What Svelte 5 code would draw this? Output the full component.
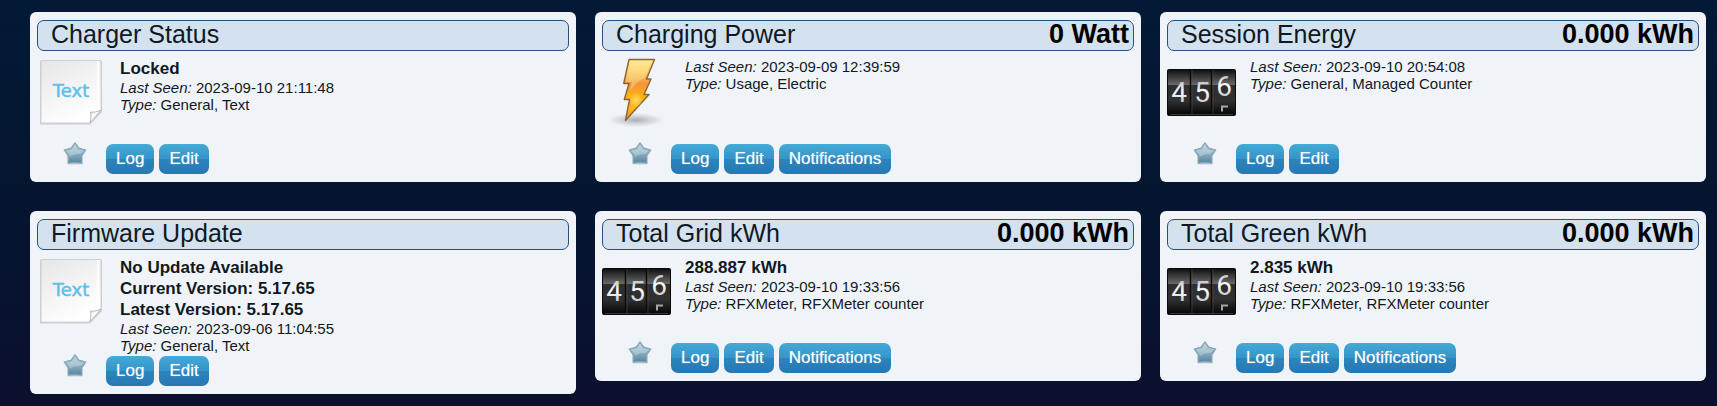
<script>
  const devices = [
    { name: 'Charger Status', value: '', icon: 'text', lines: ['Locked'], seen: '2023-09-10 21:11:48', type: 'General, Text', actions: ['Log', 'Edit'] },
    { name: 'Charging Power', value: '0 Watt', icon: 'power', lines: [], seen: '2023-09-09 12:39:59', type: 'Usage, Electric', actions: ['Log', 'Edit', 'Notifications'] },
    { name: 'Session Energy', value: '0.000 kWh', icon: 'counter', lines: [], seen: '2023-09-10 20:54:08', type: 'General, Managed Counter', actions: ['Log', 'Edit'] },
    { name: 'Firmware Update', value: '', icon: 'text', lines: ['No Update Available', 'Current Version: 5.17.65', 'Latest Version: 5.17.65'], seen: '2023-09-06 11:04:55', type: 'General, Text', actions: ['Log', 'Edit'] },
    { name: 'Total Grid kWh', value: '0.000 kWh', icon: 'counter', lines: ['288.887 kWh'], seen: '2023-09-10 19:33:56', type: 'RFXMeter, RFXMeter counter', actions: ['Log', 'Edit', 'Notifications'] },
    { name: 'Total Green kWh', value: '0.000 kWh', icon: 'counter', lines: ['2.835 kWh'], seen: '2023-09-10 19:33:56', type: 'RFXMeter, RFXMeter counter', actions: ['Log', 'Edit', 'Notifications'] }
  ];
</script>

<svg class="defs" width="0" height="0" aria-hidden="true">
  <defs>
    <linearGradient id="paper" x1="0" y1="0" x2="0.5" y2="1">
      <stop offset="0" stop-color="#e6e6e6" />
      <stop offset="0.55" stop-color="#f4f4f4" />
      <stop offset="1" stop-color="#ffffff" />
    </linearGradient>
    <linearGradient id="fold" x1="0" y1="0" x2="1" y2="1">
      <stop offset="0" stop-color="#d2d2d2" />
      <stop offset="0.4" stop-color="#ffffff" />
      <stop offset="1" stop-color="#c4c4c4" />
    </linearGradient>
    <linearGradient id="bolt" x1="0" y1="0" x2="0" y2="1">
      <stop offset="0" stop-color="#ffe488" />
      <stop offset="0.2" stop-color="#fbc95e" />
      <stop offset="0.4" stop-color="#f3963a" />
      <stop offset="0.6" stop-color="#fbb012" />
      <stop offset="0.8" stop-color="#fdb61b" />
      <stop offset="1" stop-color="#ee8a10" />
    </linearGradient>
    <radialGradient id="shade">
      <stop offset="0" stop-color="#70757c" stop-opacity="0.55" />
      <stop offset="0.5" stop-color="#70757c" stop-opacity="0.25" />
      <stop offset="1" stop-color="#70757c" stop-opacity="0" />
    </radialGradient>
    <radialGradient id="glow">
      <stop offset="0" stop-color="#fff29a" />
      <stop offset="1" stop-color="#fff29a" stop-opacity="0" />
    </radialGradient>
    <linearGradient id="drum" x1="0" y1="0" x2="0" y2="1">
      <stop offset="0" stop-color="#101010" />
      <stop offset="0.1" stop-color="#2c2c2c" />
      <stop offset="0.33" stop-color="#686868" />
      <stop offset="0.34" stop-color="#2e2e2e" />
      <stop offset="0.7" stop-color="#303030" />
      <stop offset="1" stop-color="#080808" />
    </linearGradient>
    <linearGradient id="digit" x1="0" y1="0" x2="0" y2="1">
      <stop offset="0" stop-color="#a8a8a8" />
      <stop offset="0.5" stop-color="#ffffff" />
      <stop offset="1" stop-color="#a0a0a0" />
    </linearGradient>
    <linearGradient id="star" x1="0" y1="0" x2="0" y2="1">
      <stop offset="0" stop-color="#b4cad6" />
      <stop offset="0.45" stop-color="#92b4c5" />
      <stop offset="1" stop-color="#5784a0" />
    </linearGradient>
    <clipPath id="window"><rect x="1" y="12" width="67" height="44" rx="1" /></clipPath>
  </defs>
</svg>

<main>
  {#each devices as device}
    <article>
      <header>
        <h2>{device.name}</h2>
        {#if device.value}<strong>{device.value}</strong>{/if}
      </header>

      <div class="body">
        <svg class="icon" viewBox="0 0 69 69" aria-hidden="true">
          {#if device.icon === 'text'}
            <path d="M3 3H65V54L53 66.500H3Z" fill="#9da1a6" opacity="0.45" />
            <path d="M4 2.500H64V53L53 65H4Z" fill="url(#paper)" stroke="#cfd0d3" stroke-width="1" />
            <path d="M61 3V50" stroke="#fff" stroke-width="2" />
            <path d="M53 65C54 61 54 57 53.500 54C56.500 54.500 60 54 64 52Z" fill="url(#fold)" stroke="#b9b9b9" stroke-width="1" />
            <text x="34" y="39" class="paper-text">Text</text>
          {:else if device.icon === 'power'}
            <ellipse cx="34" cy="62" rx="28" ry="7" fill="url(#shade)" />
            <path d="M27 1.500H52.500L44.500 21H49L42 36.500H47L23.500 62.500L27.500 41.500H22.300L27 25.500H21.700Z" fill="url(#bolt)" stroke="#8b6634" stroke-width="1.400" stroke-linejoin="round" />
            <path d="M28 3H50L42.500 20C37 22 32 27 28 33L30 24H24Z" fill="#fff3b5" opacity="0.35" />
            <ellipse cx="34" cy="42" rx="7" ry="8" fill="url(#glow)" opacity="0.6" />
          {:else}
            <rect x="0" y="11" width="69" height="47" rx="2" fill="#0a0a0a" />
            <g clip-path="url(#window)">
              <rect x="1" y="12" width="67" height="44" fill="url(#drum)" />
              <path d="M23.500 12V56M44.500 12V56" stroke="#0b0b0b" stroke-width="1.500" />
              <path d="M25 12V56M46 12V56" stroke="#5a5a5a" stroke-width="0.500" />
              <text x="12" y="44" class="digit">4</text>
              <text x="35" y="44" class="digit">5</text>
              <text x="57" y="38" class="digit">6</text>
              <path d="M55 53.500V48.500H61" fill="none" stroke="#a5a5a5" stroke-width="2" />
            </g>
            <path d="M3 56.500H66" stroke="#555" stroke-width="0.600" />
          {/if}
        </svg>
        <div class="info">
          {#each device.lines as line}<p class="status">{line}</p>{/each}
          <p><i>Last Seen:</i> {device.seen}</p>
          <p><i>Type:</i> {device.type}</p>
        </div>
      </div>

      <footer>
        <button class="favorite" type="button" aria-label="Favorite">
          <svg viewBox="0 0 24 24" aria-hidden="true">
            <path d="M5 20.500H19.500V22.500H5Z" fill="#aab0b5" opacity="0.45" />
            <path d="M12 0.800L15.800 6.200L22.800 8L18.900 13.600L18.900 21.200L12 20.600L5.100 21.200L5.100 13.600L1.200 8L8.200 6.200Z" fill="url(#star)" stroke="#86a5b5" stroke-width="1.200" stroke-linejoin="round" />
            <path d="M12 2.800L15 7.400L20.800 8.800L17 12C12 11.500 9 13 7 15L6.500 13L3.200 8.800L9 7.400Z" fill="#dfebf0" opacity="0.35" />
          </svg>
        </button>
        <div class="actions">
          {#each device.actions as action}<button type="button">{action}</button>{/each}
        </div>
      </footer>
    </article>
  {/each}
</main>

<style>
  :global(html) {
    min-height: 100%;
    background: linear-gradient(#021a36, #051530 50%, #0b102e);
  }
  :global(body) {
    margin: 0;
    font-family: "Liberation Sans", Arial, sans-serif;
    color: #101923;
  }
  .defs {
    position: absolute;
  }
  main {
    display: grid;
    grid-template-columns: repeat(3, 1fr);
    align-items: start;
    gap: 29px 19px;
    padding: 12px 11px 12px 30px;
  }
  article {
    padding: 8px 7px;
    border-radius: 6px;
    background: #f0f4f9;
  }
  header {
    display: flex;
    justify-content: space-between;
    margin-bottom: 7px;
    padding: 0 4px 3px 13px;
    border: 1px solid #27507b;
    border-radius: 7px;
    background: #d4e1ee;
    line-height: 26px;
    white-space: nowrap;
  }
  h2 {
    margin: 0;
    font-size: 25px;
    font-weight: 400;
  }
  strong {
    color: #000;
    font-size: 27px;
  }
  .body {
    display: flex;
    gap: 14px;
    min-height: 84px;
  }
  .icon {
    flex: none;
    width: 69px;
    height: 69px;
  }
  .paper-text {
    fill: #62bfeb;
    stroke: #62bfeb;
    stroke-width: 0.5px;
    font-family: "DejaVu Sans", sans-serif;
    font-size: 18px;
    text-anchor: middle;
  }
  .digit {
    fill: url(#digit);
    font-family: Roboto, sans-serif;
    font-size: 28px;
    text-anchor: middle;
  }
  p {
    margin: 0;
    font-size: 15px;
    line-height: 17px;
  }
  .status {
    font-size: 17px;
    font-weight: 700;
    line-height: 21px;
  }
  footer {
    display: flex;
    align-items: flex-start;
    padding-left: 26px;
    gap: 19px;
  }
  button {
    border: 0;
    cursor: pointer;
  }
  .favorite {
    padding: 0;
    background: none;
  }
  .favorite svg {
    display: block;
    width: 24px;
    height: 24px;
  }
  .actions {
    display: flex;
    gap: 5px;
    padding-top: 2px;
  }
  .actions button {
    padding: 0 10px;
    border-radius: 7px;
    background: linear-gradient(#44aad6, #3594c8 50%, #2b85bd 50%, #2878b2);
    color: #fff;
    font-family: inherit;
    font-size: 17px;
    line-height: 30px;
    text-shadow: 0 0 1px #ffffff80;
  }
</style>
